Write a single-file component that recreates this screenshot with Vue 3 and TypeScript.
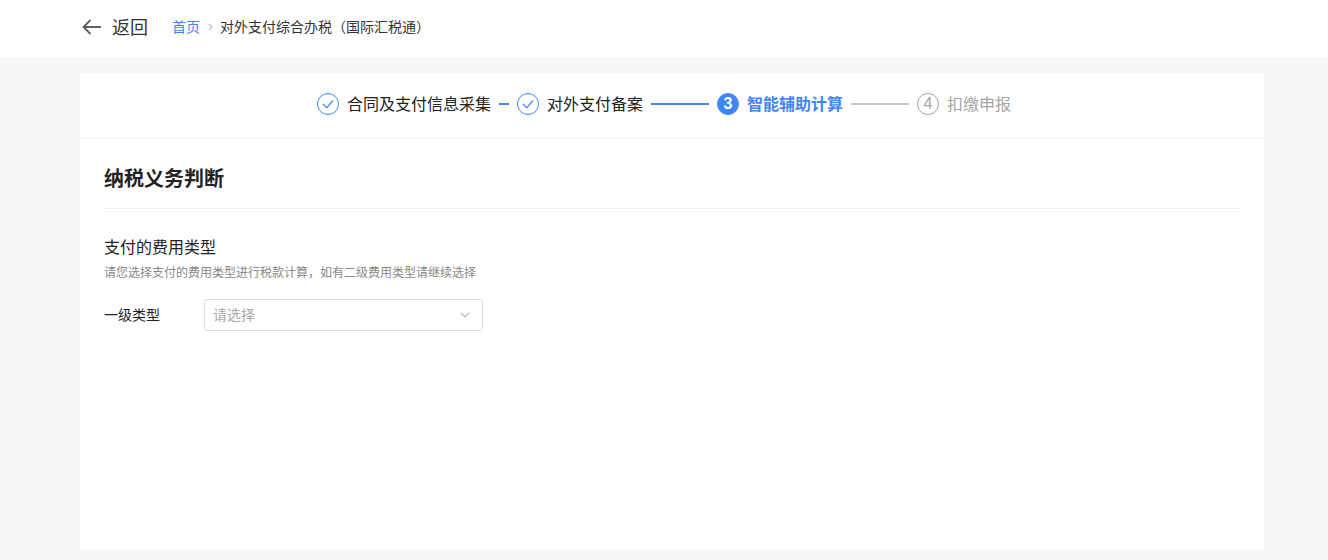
<script setup lang="ts">
interface Step {
  label: string;
  state: "done" | "active" | "todo";
  no?: number;
  line?: number;
  lineOn?: boolean;
}

const steps: Step[] = [
  { label: "合同及支付信息采集", state: "done", line: 10, lineOn: true },
  { label: "对外支付备案", state: "done", line: 58, lineOn: true },
  { label: "智能辅助计算", state: "active", no: 3, line: 58 },
  { label: "扣缴申报", state: "todo", no: 4 },
];
</script>

<template>
  <div class="page">
    <header class="topbar">
      <div class="back">
        <svg class="back-icon" width="20" height="16" viewBox="0 0 20 16" fill="none">
          <path d="M19 8H1.5M8.5 1 1.5 8l7 7" stroke="#5f5f5f" stroke-width="1.8" />
        </svg>
        <span>返回</span>
      </div>
      <nav class="crumbs">
        <a class="crumb-link">首页</a>
        <svg class="crumb-sep" width="5" height="8" viewBox="0 0 5 8" fill="none">
          <path d="M1 1l3 3-3 3" stroke="#bbb" stroke-width="1.2" />
        </svg>
        <span>对外支付综合办税（国际汇税通）</span>
      </nav>
    </header>

    <main class="card">
      <div class="steps">
        <template v-for="s in steps" :key="s.label">
          <div class="step" :class="`step-${s.state}`">
            <span class="dot">
              <svg v-if="s.state === 'done'" width="12" height="10" viewBox="0 0 12 10" fill="none">
                <path d="M1 5l3.8 3.6L11 1.5" stroke="#4285f4" stroke-width="1.2" />
              </svg>
              <template v-else>{{ s.no }}</template>
            </span>
            <span class="step-label">{{ s.label }}</span>
          </div>
          <i
            v-if="s.line"
            class="step-line"
            :class="{ on: s.lineOn }"
            :style="{ width: s.line + 'px' }"
          />
        </template>
      </div>

      <section class="body">
        <h2 class="title">纳税义务判断</h2>
        <h3 class="sub">支付的费用类型</h3>
        <p class="hint">请您选择支付的费用类型进行税款计算，如有二级费用类型请继续选择</p>
        <div class="field">
          <label class="field-label">一级类型</label>
          <div class="select">
            <span class="placeholder">请选择</span>
            <svg width="10" height="6" viewBox="0 0 10 6" fill="none">
              <path d="M.7.7 5 5 9.3.7" stroke="#b5b5b5" stroke-width="1.1" />
            </svg>
          </div>
        </div>
      </section>
    </main>
  </div>
</template>

<style>
html,
body {
  margin: 0;
  background: #f7f8fa;
}
</style>

<style scoped>
.page {
  height: 560px;
  overflow: hidden;
  background: #f7f8fa;
  color: #222;
  font-family: "Liberation Sans", "Noto Sans CJK SC", sans-serif;
}

.topbar {
  height: 57px;
  box-sizing: border-box;
  background: #fff;
  display: flex;
  align-items: center;
  padding: 0 80px 5px;
  margin-bottom: 16px;
}

.back {
  display: flex;
  align-items: center;
  gap: 10px;
  font-size: 18px;
  color: #333;
  margin-right: 24px;
}

.back-icon {
  margin: 2px 0 0 2px;
}

.crumbs {
  display: flex;
  align-items: center;
  gap: 6px;
  font-size: 14px;
  color: #333;
}

.crumb-link {
  color: #4285f4;
}

.crumb-sep {
  margin: 2px 1px 0 2px;
}

.card {
  width: 1184px;
  height: 477px;
  margin-left: 80px;
  background: #fff;
}

.steps {
  height: 66px;
  box-sizing: border-box;
  border-bottom: 1px solid #f2f2f2;
  display: flex;
  align-items: center;
  justify-content: center;
  gap: 8px;
  padding: 0 16px 4px 0;
}

.step {
  display: flex;
  align-items: center;
  gap: 8px;
  font-size: 16px;
  color: #222;
}

.step-label {
  padding-bottom: 2px;
}

.dot {
  width: 22px;
  height: 22px;
  box-sizing: border-box;
  border-radius: 50%;
  border: 1px solid #4285f4;
  display: flex;
  align-items: center;
  justify-content: center;
  font-size: 16px;
}

.step-active {
  color: #4285f4;
  font-weight: 700;
}

.step-active .dot {
  background: #4285f4;
  color: #fff;
}

.step-todo {
  color: #a5a5a5;
}

.step-todo .dot {
  border-color: #a5a5a5;
}

.step-line {
  display: block;
  height: 2px;
  background: #c8c8c8;
}

.step-line.on {
  background: #4285f4;
}

.body {
  padding: 0 24px;
}

.title {
  margin: 0 0 28px;
  height: 69px;
  line-height: 80px;
  border-bottom: 1px solid #eee;
  font-size: 20px;
  font-weight: 700;
  color: #222;
}

.sub {
  margin: 0;
  font-size: 16px;
  font-weight: 400;
  line-height: 22px;
  color: #222;
}

.hint {
  margin: 6px 0 18px;
  font-size: 12px;
  line-height: 16px;
  color: #888;
}

.field {
  display: flex;
  align-items: center;
}

.field-label {
  width: 100px;
  font-size: 14px;
  color: #222;
  padding-bottom: 2px;
}

.select {
  width: 279px;
  height: 32px;
  box-sizing: border-box;
  border: 1px solid #ddd;
  border-radius: 3px;
  display: flex;
  align-items: center;
  justify-content: space-between;
  padding: 0 12px 0 8px;
  font-size: 14px;
  color: #aaa;
}

.placeholder {
  padding-bottom: 2px;
}
</style>
